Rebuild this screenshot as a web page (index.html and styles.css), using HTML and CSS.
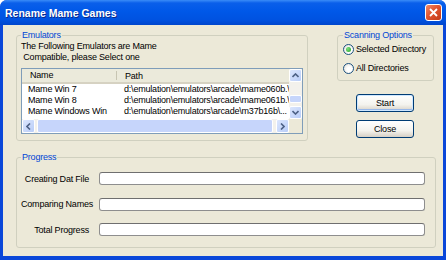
FILE: index.html
```html
<!DOCTYPE html>
<html lang="en">
  <head>
    <meta charset="UTF-8" />
    <title>Rename Mame Games</title>
    <link rel="stylesheet" href="styles.css">
  </head>
  <body>
    <div class="window">
      <div class="titlebar">
        <span class="title">Rename Mame Games</span>
        <span class="close-btn">
          <svg width="9" height="9" viewBox="0 0 9 9">
            <path d="M1 1L8 8M8 1L1 8" stroke="#fff" stroke-width="1.8" />
          </svg>
        </span>
      </div>

      <div class="client">
        <div class="top-row">
          <fieldset class="group emulators">
            <legend>Emulators</legend>
            <p class="intro">The Following Emulators are Mame<br />&nbsp;Compatible, please Select one</p>

            <div class="listview">
              <div class="list-main">
                <div class="list-header">
                  <span class="col-name">Name</span>
                  <span class="col-path">Path</span>
                </div>
                <div class="list-row">
                  <span class="col-name">Mame Win 7</span>
                  <span class="col-path">d:\emulation\emulators\arcade\mame060b.\</span>
                </div>
                <div class="list-row">
                  <span class="col-name">Mame Win 8</span>
                  <span class="col-path">d:\emulation\emulators\arcade\mame061b.\</span>
                </div>
                <div class="list-row">
                  <span class="col-name">Mame Windows Win</span>
                  <span class="col-path">d:\emulation\emulators\arcade\m37b16b\...</span>
                </div>
              </div>

              <div class="vscroll">
                <span class="sb-btn">
                  <svg width="7" height="5" viewBox="0 0 7 5"><path d="M0.5 4L3.5 1L6.5 4" fill="none" stroke="#4d6185" stroke-width="1.6" /></svg>
                </span>
                <span class="sb-thumb v"></span>
                <span class="sb-btn">
                  <svg width="7" height="5" viewBox="0 0 7 5"><path d="M0.5 1L3.5 4L6.5 1" fill="none" stroke="#4d6185" stroke-width="1.6" /></svg>
                </span>
              </div>

              <div class="hscroll">
                <span class="sb-btn">
                  <svg width="5" height="7" viewBox="0 0 5 7"><path d="M4 0.5L1 3.5L4 6.5" fill="none" stroke="#4d6185" stroke-width="1.6" /></svg>
                </span>
                <span class="sb-thumb h"></span>
                <span class="sb-btn">
                  <svg width="5" height="7" viewBox="0 0 5 7"><path d="M1 0.5L4 3.5L1 6.5" fill="none" stroke="#4d6185" stroke-width="1.6" /></svg>
                </span>
              </div>
              <div class="sb-corner"></div>
            </div>
          </fieldset>

          <div class="side">
            <fieldset class="group options">
              <legend>Scanning Options</legend>
              <label class="radio"><span class="radio-dot checked"></span>Selected Directory</label>
              <label class="radio"><span class="radio-dot"></span>All Directories</label>
            </fieldset>
            <button class="btn default">Start</button>
            <button class="btn">Close</button>
          </div>
        </div>

        <fieldset class="group progress">
          <legend>Progress</legend>
          <div class="progress-grid">
            <span class="progress-label">Creating Dat File</span>
            <div class="bar"></div>
            <span class="progress-label">Comparing Names</span>
            <div class="bar"></div>
            <span class="progress-label">Total Progress</span>
            <div class="bar"></div>
          </div>
        </fieldset>
      </div>
    </div>
  </body>
</html>
```

FILE: styles.css
```css
* {
  box-sizing: border-box;
}
body {
  margin: 0;
  font-family: "Liberation Sans", Arial, sans-serif;
  font-size: 9px;
  letter-spacing: -0.2px;
  color: #000;
  background: #fff;
}
.window {
  width: 446px;
  height: 260px;
  display: flex;
  flex-direction: column;
  background: #0a47d9;
  border-radius: 7px 7px 0 0;
  overflow: hidden;
}
.titlebar {
  height: 25px;
  display: flex;
  align-items: center;
  justify-content: space-between;
  padding: 0 4px 0 5px;
  background: linear-gradient(#3a8cf8 0%, #0a5fea 12%, #0058e8 45%, #0052e0 80%, #0046cc 100%);
}
.title {
  color: #fff;
  font-weight: bold;
  font-size: 10.5px;
  letter-spacing: 0;
  text-shadow: 1px 1px 0 #0a2a8c;
}
.close-btn {
  width: 17px;
  height: 17px;
  display: flex;
  align-items: center;
  justify-content: center;
  border: 1px solid #fff;
  border-radius: 3px;
  background: linear-gradient(135deg, #f08a6a 0%, #e1542f 45%, #c23a18 100%);
}
.client {
  flex: 1;
  margin: 0 3px 4px 3px;
  background: #ece9d8;
  padding: 4px 0 0 13px;
}
.top-row {
  display: flex;
  gap: 29px;
}
.group {
  margin: 0;
  min-width: 0;
  border: 1px solid #d0d0bf;
  border-radius: 3px;
}
.group legend {
  padding: 0 1px;
  line-height: 12px;
  color: #0046d5;
}
.emulators {
  width: 292px;
  height: 112px;
  padding: 0 4px;
}
.intro {
  margin: 0;
  line-height: 11px;
}
.listview {
  margin-top: 5px;
  height: 66px;
  border: 1px solid #7f9db9;
  background: #fff;
  display: grid;
  grid-template-columns: 1fr 13px;
  grid-template-rows: 50px 14px;
  overflow: hidden;
}
.list-main {
  overflow: hidden;
  white-space: nowrap;
}
.list-header {
  height: 15px;
  display: flex;
  align-items: center;
  background: #ebeadb;
  border-bottom: 2px solid #d6d2c2;
}
.col-name {
  width: 95px;
  flex-shrink: 0;
  overflow: hidden;
}
.list-header .col-name {
  padding-left: 8px;
  border-right: 1px solid #c7c5b2;
  line-height: 9px;
}
.list-header .col-path {
  padding-left: 8px;
}
.list-row {
  height: 11px;
  line-height: 11px;
  display: flex;
}
.list-row .col-name {
  padding-left: 6px;
}
.list-row .col-path {
  padding-left: 7px;
}
.vscroll {
  display: flex;
  flex-direction: column;
  background: #f3f1ec;
}
.hscroll {
  display: flex;
  background: #f3f1ec;
}
.sb-btn {
  width: 13px;
  height: 13px;
  flex-shrink: 0;
  display: flex;
  align-items: center;
  justify-content: center;
  border: 1px solid #fff;
  border-radius: 2px;
  background: linear-gradient(135deg, #dbe6fd, #b9cdf8);
}
.hscroll .sb-btn {
  height: 14px;
}
.sb-thumb {
  border: 1px solid #fff;
  border-radius: 2px;
  background: #c6d5fb;
}
.sb-thumb.v {
  height: 8px;
  margin: auto 0 3px 0;
}
.sb-thumb.h {
  flex: 1;
  margin: 0 3px 0 2px;
}
.sb-corner {
  background: #ece9d8;
}
.side {
  width: 97px;
  display: flex;
  flex-direction: column;
}
.options {
  height: 52px;
  padding: 1px 5px 0 5px;
}
.radio {
  height: 14px;
  display: flex;
  align-items: center;
  gap: 2px;
  white-space: nowrap;
}
.radio + .radio {
  margin-top: 5px;
}
.radio-dot {
  width: 11px;
  height: 11px;
  border-radius: 50%;
  border: 1px solid #1c5180;
  background: radial-gradient(circle at 60% 60%, #fff 30%, #dcdad0 100%);
  display: flex;
  align-items: center;
  justify-content: center;
}
.radio-dot.checked::after {
  content: "";
  width: 5px;
  height: 5px;
  border-radius: 50%;
  background: radial-gradient(circle at 35% 35%, #7ee07e, #21a121);
}
.btn {
  width: 58px;
  height: 18px;
  margin-left: 19px;
  padding: 0;
  font-family: inherit;
  font-size: 9px;
  letter-spacing: inherit;
  color: #000;
  border: 1px solid #003c74;
  border-radius: 3px;
  background: linear-gradient(#fff 0%, #f4f3ee 60%, #d6d0c5 100%);
}
.btn.default {
  margin-top: 13px;
  box-shadow: inset 0 0 0 1px #cee7ff, inset 0 -1px 0 1px #98b8ea;
}
.btn + .btn {
  margin-top: 8px;
}
.progress {
  margin-top: 10px;
  width: 420px;
  height: 97px;
  padding: 9px 10px 10px 4px;
}
.progress-grid {
  display: grid;
  grid-template-columns: 68px 1fr;
  column-gap: 10px;
  row-gap: 12.5px;
  align-items: center;
}
.progress-label {
  text-align: right;
  white-space: nowrap;
}
.bar {
  height: 13px;
  border: 1px solid #8e8e8e;
  border-top-color: #6f6f6f;
  border-radius: 3px;
  background: #fff;
}
```
